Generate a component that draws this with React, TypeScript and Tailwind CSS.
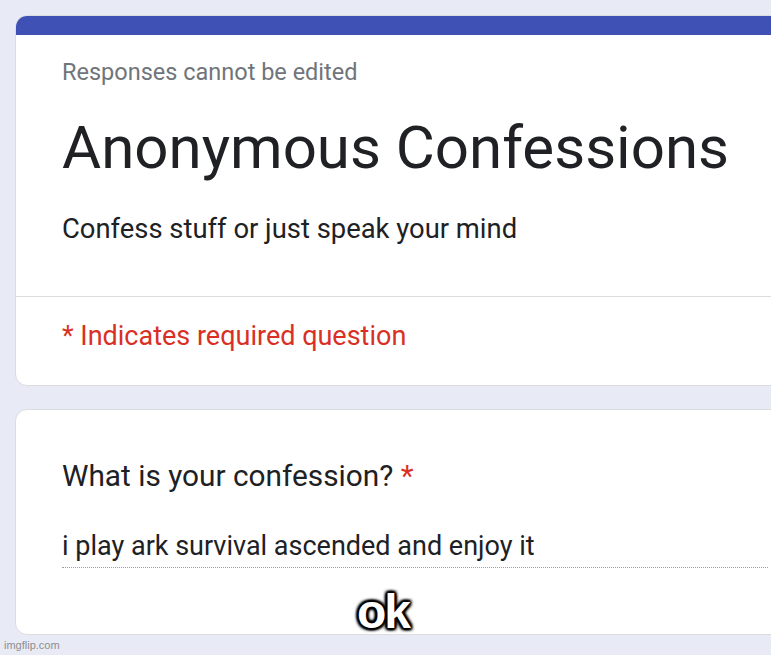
export default function App() {
  return (
    <div className="relative h-[655px] w-[771px] overflow-hidden bg-[#e8eaf6] font-['Roboto',sans-serif]">
      <div className="flex flex-col gap-[23px] pl-[15px] pt-[15px]">
        {/* Header card */}
        <div className="w-[800px] overflow-hidden rounded-[12px] border border-[#dadce0] bg-white">
          <div className="h-[19px] bg-[#3f51b5]" />
          <div className="px-[46px] pt-[23px] pb-[50px]">
            <p className="text-[23.5px] leading-[28px] text-[#70757a]">Responses cannot be edited</p>
            <h1 className="mt-[26px] text-[60px] leading-[72px] text-[#202124]">Anonymous Confessions</h1>
            <p className="mt-[28px] text-[27.4px] leading-[34px] text-[#202124]">Confess stuff or just speak your mind</p>
          </div>
          <div className="border-t border-[#dadce0] px-[46px] pt-[22px] pb-[32px]">
            <p className="text-[27px] leading-[34px] text-[#d93025]">* Indicates required question</p>
          </div>
        </div>

        {/* Question card */}
        <div className="w-[800px] rounded-[12px] border border-[#dadce0] bg-white px-[46px] pt-[48px] pb-[66px]">
          <p className="text-[29.8px] leading-[36px] text-[#202124]">
            What is your confession? <span className="text-[#d93025]">*</span>
          </p>
          <p className="mt-[37px] border-b border-dotted border-[#9aa0a6] pb-[6px] text-[27px] leading-[30px] text-[#202124]">
            i play ark survival ascended and enjoy it
          </p>
        </div>
      </div>

      {/* Meme caption */}
      <div className="absolute left-[357px] top-[582px] font-['Liberation_Sans',sans-serif] text-[48px] font-bold leading-[60px] tracking-[-2px] text-white [text-shadow:0_0_2px_#000,0_0_2px_#000,2px_0_2px_#000,-2px_0_2px_#000,0_2px_2px_#000,0_-2px_2px_#000,2px_2px_3px_#000,-2px_-2px_3px_#000,2px_-2px_3px_#000,-2px_2px_3px_#000]">
        ok
      </div>

      <div className="absolute bottom-[3px] left-[4px] font-['Liberation_Sans',sans-serif] text-[11px] leading-[14px] text-[#8f8f8f]">
        imgflip.com
      </div>
    </div>
  );
}
